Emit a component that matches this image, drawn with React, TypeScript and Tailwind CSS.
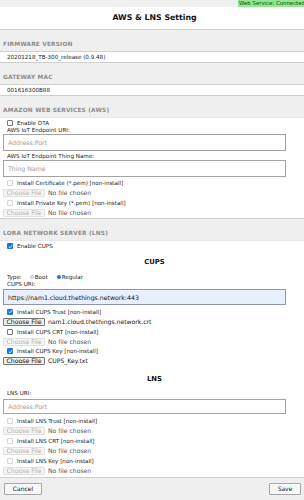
import React from "react";

const body = { fontFamily: '"DejaVu Sans", Verdana, sans-serif' };

function SectionHeader({ title }: { title: string }) {
    return (
        <div className="h-[22px] bg-[#efefef] border-t border-[#cfcfcf] flex items-end pb-[4px] pl-[3px]">
            <span className="text-[5.8px] leading-[6px] font-bold tracking-[0.2px] text-[#8c8c8c]">{title}</span>
        </div>
    );
}

function ValueRow({ value }: { value: string }) {
    return (
        <div className="h-[11px] bg-white border-t border-[#cfcfcf] flex items-center pl-[7px]">
            <span className="text-[5.6px] leading-[6px] text-[#222]">{value}</span>
        </div>
    );
}

function Check({ checked, disabled, label, h = "h-[11px]" }: { checked?: boolean; disabled?: boolean; label: string; h?: string }) {
    return (
        <div className={`${h} flex items-center pl-[7px]`}>
            {checked ? (
                <span className="w-[6px] h-[6px] rounded-[1px] bg-[#1a73e8] flex items-center justify-center">
                    <svg width="5" height="5" viewBox="0 0 10 10">
                        <path d="M1.5 5.2 L4 7.6 L8.6 2.2" stroke="white" strokeWidth="1.8" fill="none" />
                    </svg>
                </span>
            ) : (
                <span
                    className={`w-[6px] h-[6px] rounded-[1px] border bg-white ${disabled ? "border-[#d4d4d4]" : "border-[#767676]"}`}
                />
            )}
            <span className="ml-[4px] text-[5.6px] leading-[6px] text-[#222] whitespace-nowrap">{label}</span>
        </div>
    );
}

function FileRow({ disabled, file }: { disabled?: boolean; file?: string }) {
    return (
        <div className="h-[9px] flex items-center pl-[3px]">
            <span
                className={`h-[8px] w-[42px] flex items-center justify-center rounded-[1px] border text-[6.2px] leading-[6px] ${
                    disabled ? "bg-[#f5f5f5] border-[#e0e0e0] text-[#b4b4b4]" : "bg-[#efefef] border-[#767676] text-[#111]"
                }`}
            >
                Choose File
            </span>
            <span className={`ml-[3px] text-[6.1px] leading-[6px] whitespace-nowrap ${disabled ? "text-[#555]" : "text-[#111]"}`}>
                {file ?? "No file chosen"}
            </span>
        </div>
    );
}

function Label({ text, h = "h-[6px]" }: { text: string; h?: string }) {
    return (
        <div className={`${h} flex items-center pl-[7px]`}>
            <span className="text-[5.6px] leading-[6px] text-[#222] whitespace-nowrap">{text}</span>
        </div>
    );
}

function TextInput({ placeholder, value, h = "h-[17px]", filled }: { placeholder?: string; value?: string; h?: string; filled?: boolean }) {
    return (
        <div className="pl-[3px]">
            <div
                className={`${h} w-[283px] border flex items-center pl-[4px] ${
                    filled ? "bg-[#e8f0fe] border-[#8e96a8]" : "bg-white border-[#a3a3a3]"
                }`}
            >
                <span className={`text-[6.2px] leading-[7px] ${value ? "text-[#111]" : "text-[#9a9a9a]"}`}>{value ?? placeholder}</span>
            </div>
        </div>
    );
}

function SubTitle({ text, h }: { text: string; h: string }) {
    return (
        <div className={`${h} flex items-center justify-center pl-[5px]`}>
            <span className="text-[6.8px] leading-[7px] font-bold text-[#111]">{text}</span>
        </div>
    );
}

export default function App() {
    return (
        <div className="w-[304px] h-[500px] overflow-hidden bg-white" style={body}>
            <div className="h-[7px] bg-[#f0f0f0] flex pl-[238px] overflow-hidden">
                <span className="shrink-0 bg-[#8fe98f] text-[5.4px] leading-[7px] text-[#1d3d1d] px-[1px] whitespace-nowrap">
                    Web Service: Connected
                </span>
            </div>
            <div className="h-[22px] flex items-center justify-center pl-[5px]">
                <span className="text-[7.8px] leading-[8px] font-bold text-[#111]">AWS &amp; LNS Setting</span>
            </div>

            <SectionHeader title="FIRMWARE VERSION" />
            <ValueRow value="20201218_TB-300_release (0.9.48)" />
            <SectionHeader title="GATEWAY MAC" />
            <ValueRow value="001616300B88" />
            <SectionHeader title="AMAZON WEB SERVICES (AWS)" />

            <div className="border-t border-[#e6e6e6]">
                <Check label="Enable OTA" h="h-[9px]" />
                <Label text="AWS IoT Endpoint URI:" />
                <div className="mt-[1px]">
                    <TextInput placeholder="Address:Port" />
                </div>
                <Label text="AWS IoT Endpoint Thing Name:" h="h-[9px]" />
                <TextInput placeholder="Thing Name" />
                <Check disabled label="Install Certificate (*.pem) [non-install]" />
                <FileRow disabled />
                <Check disabled label="Install Private Key (*.pem) [non-install]" />
                <FileRow disabled />
                <div className="h-[1px]" />
            </div>

            <SectionHeader title="LORA NETWORK SERVER (LNS)" />
            <div className="border-t border-[#e6e6e6]">
                <Check checked label="Enable CUPS" h="h-[10px]" />
                <SubTitle text="CUPS" h="h-[22px]" />
                <div className="h-[7px] flex items-center pl-[7px] text-[5.6px] leading-[6px] text-[#222]">
                    <span>Type:</span>
                    <span className="ml-[8px] w-[4px] h-[4px] rounded-full border border-[#bdbdbd] bg-white" />
                    <span className="ml-[1px]">Boot</span>
                    <span className="ml-[9px] w-[4px] h-[4px] rounded-full bg-[#1a73e8]" />
                    <span className="ml-[1px]">Regular</span>
                </div>
                <Label text="CUPS URI:" h="h-[7px]" />
                <div className="mt-[2px]">
                    <TextInput value="https://nam1.cloud.thethings.network:443" h="h-[16px]" filled />
                </div>
                <div className="mt-[1px]">
                    <Check checked label="Install CUPS Trust [non-install]" />
                </div>
                <FileRow file="nam1.cloud.thethings.network.crt" />
                <Check label="Install CUPS CRT [non-install]" />
                <FileRow disabled />
                <Check checked label="Install CUPS Key [non-install]" h="h-[10px]" />
                <FileRow file="CUPS_Key.txt" />

                <div className="mt-[6px]">
                    <SubTitle text="LNS" h="h-[16px]" />
                </div>
                <div className="mt-[2px]">
                    <Label text="LNS URI:" h="h-[8px]" />
                </div>
                <div className="mt-[2px]">
                    <TextInput placeholder="Address:Port" h="h-[15px]" />
                </div>
                <div className="mt-[1px]">
                    <Check disabled label="Install LNS Trust [non-install]" />
                </div>
                <FileRow disabled />
                <Check disabled label="Install LNS CRT [non-install]" />
                <FileRow disabled />
                <Check disabled label="Install LNS Key [non-install]" />
                <FileRow disabled />
                <div className="h-[2px]" />
            </div>

            <div className="h-[24px] bg-[#efefef] border-t border-[#cfcfcf] flex justify-between items-start pt-[5px] pl-[4px] pr-[3px]">
                <button className="h-[12px] w-[38px] bg-[#f7f7f7] border border-[#a8a8a8] rounded-[1px] text-[6px] leading-[6px] text-[#111]">
                    Cancel
                </button>
                <button className="h-[12px] w-[32px] bg-[#f7f7f7] border border-[#a8a8a8] rounded-[1px] text-[6px] leading-[6px] text-[#111]">
                    Save
                </button>
            </div>
        </div>
    );
}
